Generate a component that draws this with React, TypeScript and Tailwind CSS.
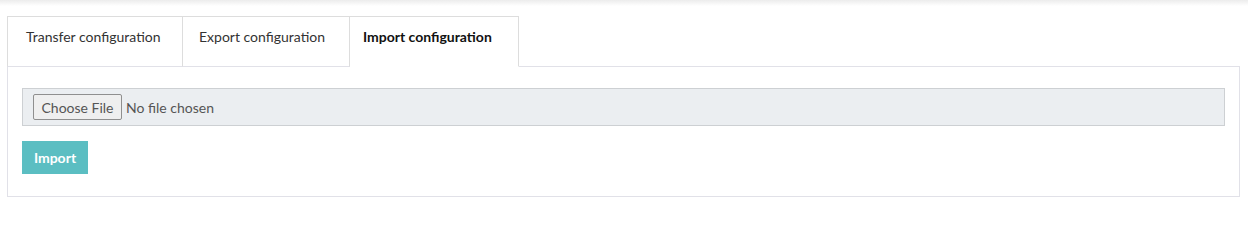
import { useState } from "react";

const tabs = [
  { id: "transfer", label: "Transfer configuration", width: "w-[176px] pl-[18px]" },
  { id: "export", label: "Export configuration", width: "w-[167px] pl-[16px]" },
  { id: "import", label: "Import configuration", width: "w-[169px] pl-[13px]" },
];

function FileField() {
  return (
    <div className="flex h-[38px] items-center border border-[#cdd0d3] bg-[#ebeef1] pl-[10px]">
      <span className="flex h-[26px] w-[89px] items-center justify-center rounded-[2px] border border-[#8f8f8f] bg-[#efefef] text-[14px] text-[#555]">
        Choose File
      </span>
      <span className="ml-[4px] text-[14px] text-[#555]">No file chosen</span>
    </div>
  );
}

export default function App() {
  const [active, setActive] = useState("import");

  return (
    <div className="min-h-[212px] bg-white font-['Lato','Liberation_Sans',sans-serif]">
      <div className="h-[6px] bg-gradient-to-b from-[#ececec] to-white" />
      <div className="pl-[7px] pr-[8px] pt-[10px]">
        <div className="flex">
          {tabs.map((tab, i) => {
            const isActive = tab.id === active;
            return (
              <button
                key={tab.id}
                onClick={() => setActive(tab.id)}
                className={`-mb-px flex h-[51px] items-start justify-start border-t border-r border-[#dddddd] pt-[10px] text-[14px] leading-[20px] ${tab.width} ${
                  i === 0 ? "border-l" : ""
                } ${
                  isActive
                    ? "relative z-10 border-b border-b-white bg-white font-bold text-[#111]"
                    : "border-b border-b-[#e1e1e8] text-[#333]"
                }`}
              >
                {tab.label}
              </button>
            );
          })}
        </div>
        <div className="border border-[#e1e1e8] px-[14px] pt-[21px] pb-[22px]">
          <FileField />
          <button className="mt-[15px] flex h-[33px] w-[66px] items-center justify-center bg-[#5bbec2] text-[14px] font-bold text-white">
            Import
          </button>
        </div>
      </div>
    </div>
  );
}
